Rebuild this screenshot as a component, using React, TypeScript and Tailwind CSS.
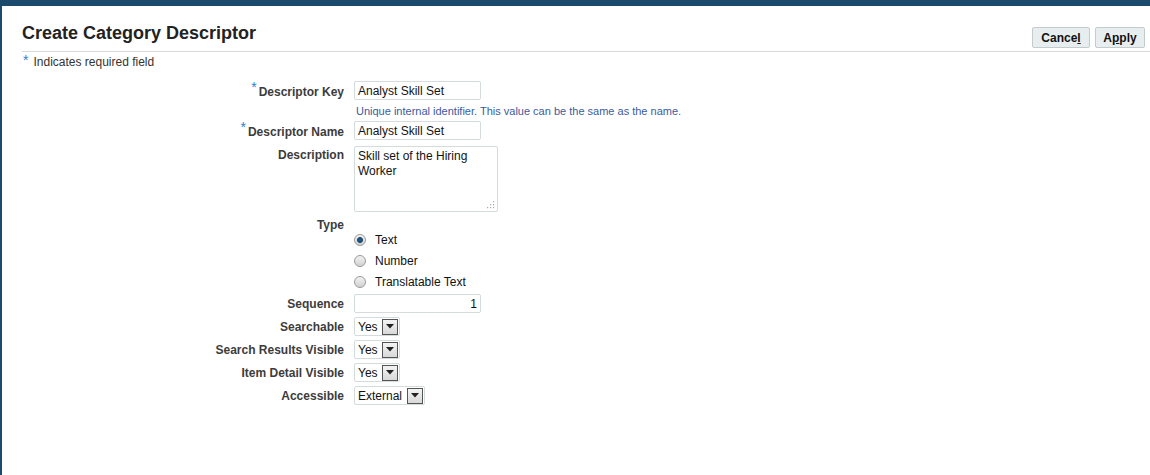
import React from "react";

const font = { fontFamily: '"Liberation Sans", Arial, sans-serif' };

function Label({ children, required }: { children: React.ReactNode; required?: boolean }) {
  return (
    <div className="w-[322px] flex justify-end items-center pr-0 text-[12px] font-bold text-[#3c3c3c] whitespace-nowrap">
      {required && <span className="text-[#2a7fd4] text-[14px] font-normal mr-[2px] relative top-[-4px]">*</span>}
      {children}
    </div>
  );
}

function TextBox({ value, w = 127, right }: { value: string; w?: number; right?: boolean }) {
  return (
    <div
      className={`h-[19px] border border-[#d3dbdc] rounded-[2px] bg-white flex items-center px-[3px] text-[12px] text-[#111] ${right ? "justify-end" : ""}`}
      style={{ width: w }}
    >
      {value}
    </div>
  );
}

function Select({ value, w }: { value: string; w: number }) {
  return (
    <div
      className="h-[19px] border border-[#d3dbdc] rounded-[2px] bg-white flex items-center justify-between pl-[3px] pr-[1px] text-[12px] text-[#111]"
      style={{ width: w }}
    >
      <span>{value}</span>
      <span className="w-[16px] h-[16px] border border-[#555] bg-gradient-to-b from-[#f4f4f4] to-[#d8d8d8] flex items-center justify-center">
        <svg width="8" height="5" viewBox="0 0 8 5">
          <polygon points="0,0 8,0 4,4.5" fill="#222" />
        </svg>
      </span>
    </div>
  );
}

function Radio({ checked }: { checked?: boolean }) {
  return (
    <span className="w-[12px] h-[12px] rounded-full border border-[#9a9a9a] bg-gradient-to-b from-[#f2f2f2] to-[#d2d2d2] flex items-center justify-center">
      {checked && <span className="w-[6px] h-[6px] rounded-full bg-[#1d5a8a] border border-[#123a5a]" />}
    </span>
  );
}

function Row({ children, className = "" }: { children: React.ReactNode; className?: string }) {
  return <div className={`flex gap-[10px] ${className}`}>{children}</div>;
}

export default function App() {
  return (
    <div style={font} className="w-[1150px] h-[475px] bg-white border-t-[6px] border-l-[2px] border-[#1b4a6c] overflow-hidden">
      <div className="ml-[20px] h-[46px] flex items-end justify-between border-b border-[#d9d9d9] pb-[3px] pr-[5px]">
        <div className="text-[18px] font-bold text-[#222] mb-[4px] leading-[22px]">Create Category Descriptor</div>
        <div className="flex gap-[5px]">
          <button className="h-[21px] w-[58px] border border-[#c3cccc] rounded-[2px] bg-[#e8eef0] text-[12px] font-bold text-[#111]">
            Cance<span className="underline">l</span>
          </button>
          <button className="h-[21px] w-[50px] border border-[#c3cccc] rounded-[2px] bg-[#e8eef0] text-[12px] font-bold text-[#111]">
            A<span className="underline">p</span>ply
          </button>
        </div>
      </div>
      <div className="ml-[21px] mt-[1px] flex items-start text-[12px] text-[#333]">
        <span className="text-[#2a7fd4] text-[14px] leading-[14px]">*</span>
        <span className="ml-[5px] leading-[14px] mt-[2px]">Indicates required field</span>
      </div>
      <div className="ml-[20px] mt-[12px] flex flex-col">
        <Row>
          <Label required>Descriptor Key</Label>
          <TextBox value="Analyst Skill Set" />
        </Row>
        <Row className="mt-[2px]">
          <div className="w-[322px]" />
          <div className="ml-[2px] text-[11px] text-[#3b5aa0] leading-[14px]">
            Unique internal identifier. This value can be the same as the name.
          </div>
        </Row>
        <Row className="mt-[3px]">
          <Label required>Descriptor Name</Label>
          <TextBox value="Analyst Skill Set" />
        </Row>
        <Row className="mt-[4px]">
          <div className="w-[322px] flex justify-end text-[12px] font-bold text-[#3c3c3c] pt-0">Description</div>
          <div className="w-[144px] h-[66px] border border-[#d3dbdc] rounded-[2px] bg-white px-[3px] pt-[2px] text-[12px] leading-[15px] text-[#111] relative">
            Skill set of the Hiring
            <br />
            Worker
            <svg className="absolute right-[2px] bottom-[2px]" width="8" height="8" viewBox="0 0 8 8">
              <rect x="6" y="0" width="1.2" height="1.2" fill="#aaa" />
              <rect x="3" y="3" width="1.2" height="1.2" fill="#aaa" />
              <rect x="6" y="3" width="1.2" height="1.2" fill="#aaa" />
              <rect x="0" y="6" width="1.2" height="1.2" fill="#aaa" />
              <rect x="3" y="6" width="1.2" height="1.2" fill="#aaa" />
              <rect x="6" y="6" width="1.2" height="1.2" fill="#aaa" />
            </svg>
          </div>
        </Row>
        <Row className="mt-[5px]">
          <div className="w-[322px] flex justify-end text-[12px] font-bold text-[#3c3c3c] leading-[16px]">Type</div>
        </Row>
        <div className="flex flex-col mt-[-4px]">
          {[
            ["Text", true],
            ["Number", false],
            ["Translatable Text", false],
          ].map(([t, c]) => (
            <Row key={t as string} className="h-[21px] items-center">
              <div className="w-[322px]" />
              <div className="flex items-center gap-[9px] text-[12px] text-[#111]">
                <Radio checked={c as boolean} />
                <span>{t as string}</span>
              </div>
            </Row>
          ))}
        </div>
        <Row className="mt-[2px]">
          <Label>Sequence</Label>
          <TextBox value="1" right />
        </Row>
        <Row className="mt-[4px]">
          <Label>Searchable</Label>
          <Select value="Yes" w={46} />
        </Row>
        <Row className="mt-[4px]">
          <Label>Search Results Visible</Label>
          <Select value="Yes" w={46} />
        </Row>
        <Row className="mt-[4px]">
          <Label>Item Detail Visible</Label>
          <Select value="Yes" w={46} />
        </Row>
        <Row className="mt-[4px]">
          <Label>Accessible</Label>
          <Select value="External" w={71} />
        </Row>
      </div>
    </div>
  );
}
